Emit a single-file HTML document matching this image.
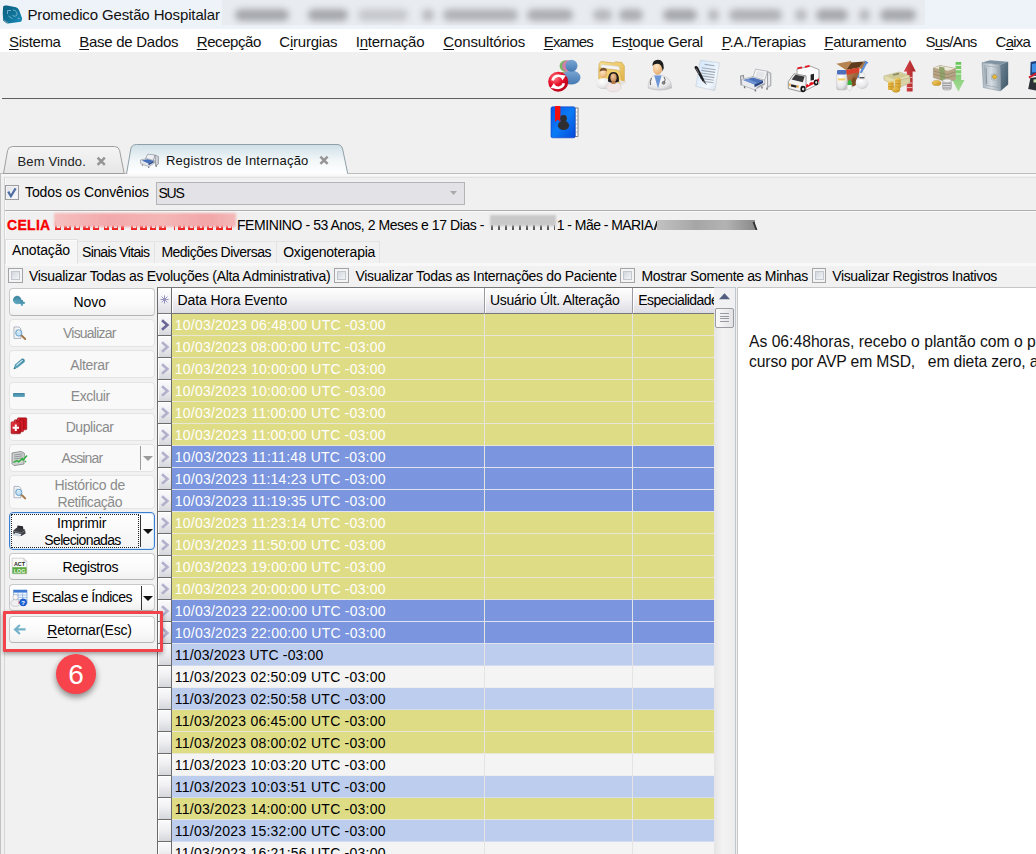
<!DOCTYPE html>
<html lang="pt-BR"><head><meta charset="utf-8"><title>Promedico Gestão Hospitalar</title>
<style>
html,body{margin:0;padding:0;background:#f0f0f0;}
body{width:1036px;height:854px;overflow:hidden;font-family:"Liberation Sans",sans-serif;}
#app{position:relative;width:1036px;height:854px;overflow:hidden;background:#f0f0f0;}
#app div,#app svg{position:absolute;box-sizing:border-box;}
.t{position:absolute;white-space:pre;line-height:1;color:#000;}
u{text-decoration:underline;text-underline-offset:2px;text-decoration-thickness:1px;}

</style></head><body>
<div id="app">
<div style="left:0px;top:0px;width:1036px;height:29px;background:#eef3f9;"></div>
<div style="left:222px;top:0px;width:703px;height:25px;background:#e8ebf0;"></div>
<div style="left:235px;top:8.5px;width:54px;height:12.5px;background:#a6a8ad;filter:blur(3.2px);border-radius:6px;"></div>
<div style="left:308px;top:8.5px;width:40px;height:12.5px;background:#a6a8ad;filter:blur(3.2px);border-radius:6px;"></div>
<div style="left:358px;top:8.5px;width:50px;height:12.5px;background:#c6c8cd;filter:blur(3.2px);border-radius:6px;"></div>
<div style="left:422px;top:8.5px;width:12px;height:12.5px;background:#b6b8bd;filter:blur(3.2px);border-radius:6px;"></div>
<div style="left:443px;top:8.5px;width:75px;height:12.5px;background:#b0b2b7;filter:blur(3.2px);border-radius:6px;"></div>
<div style="left:527px;top:8.5px;width:46px;height:12.5px;background:#acaeb3;filter:blur(3.2px);border-radius:6px;"></div>
<div style="left:593px;top:8.5px;width:19px;height:12.5px;background:#b6b8bd;filter:blur(3.2px);border-radius:6px;"></div>
<div style="left:619px;top:8.5px;width:24px;height:12.5px;background:#acaeb3;filter:blur(3.2px);border-radius:6px;"></div>
<div style="left:663px;top:8.5px;width:34px;height:12.5px;background:#a6a8ad;filter:blur(3.2px);border-radius:6px;"></div>
<div style="left:708px;top:8.5px;width:11px;height:12.5px;background:#b6b8bd;filter:blur(3.2px);border-radius:6px;"></div>
<div style="left:729px;top:8.5px;width:53px;height:12.5px;background:#b0b2b7;filter:blur(3.2px);border-radius:6px;"></div>
<div style="left:795px;top:8.5px;width:12px;height:12.5px;background:#b6b8bd;filter:blur(3.2px);border-radius:6px;"></div>
<div style="left:816px;top:8.5px;width:32px;height:12.5px;background:#a6a8ad;filter:blur(3.2px);border-radius:6px;"></div>
<div style="left:859px;top:8.5px;width:11px;height:12.5px;background:#b6b8bd;filter:blur(3.2px);border-radius:6px;"></div>
<div style="left:880px;top:8.5px;width:36px;height:12.5px;background:#a6a8ad;filter:blur(3.2px);border-radius:6px;"></div>
<span class="t" style="left:27.4px;top:6.90px;font-size:15px;color:#111;letter-spacing:-0.127px;">Promedico Gestão Hospitalar</span>
<svg style="left:0;top:0" width="26" height="29" viewBox="0 0 26 29">
<defs><linearGradient id="apg" x1="0" y1="0" x2="1" y2="1"><stop offset="0" stop-color="#0b5f7e"/><stop offset=".6" stop-color="#10769c"/><stop offset="1" stop-color="#1a8fc2"/></linearGradient></defs>
<path d="M3.2 6.2 Q4.5 5 7 5.6 L16 7.3 Q18 8 19 10 L22 18 Q22.4 21 21 21.8 L8 23.6 Q6.5 23.5 5.5 22.5 L3.2 20.4 Q2.2 13 3.2 6.2Z" fill="url(#apg)"/>
<path d="M4 20.5 L8 23" stroke="#7d97a8" stroke-width="1"/>
<g fill="none" stroke="#7fb8cf" stroke-width="1" opacity=".85"><path d="M7.5 14 V10.5 H11 M13 10 Q17.5 10.5 17 15 Q15 17.5 12.5 15.5 M8.5 16 L12.5 18.8 M17.5 18 L20 19"/></g>
</svg>
<div style="left:0px;top:29px;width:1036px;height:23px;background:#fff;"></div>
<span class="t" style="left:9px;top:33.70px;font-size:15px;color:#111;letter-spacing:-0.372px;"><u>S</u>istema</span>
<span class="t" style="left:79.3px;top:33.70px;font-size:15px;color:#111;letter-spacing:-0.276px;"><u>B</u>ase de Dados</span>
<span class="t" style="left:196.7px;top:33.70px;font-size:15px;color:#111;letter-spacing:-0.408px;"><u>R</u>ecepção</span>
<span class="t" style="left:279.3px;top:33.70px;font-size:15px;color:#111;letter-spacing:-0.227px;">C<u>i</u>rurgias</span>
<span class="t" style="left:355.7px;top:33.70px;font-size:15px;color:#111;letter-spacing:-0.229px;">I<u>n</u>ternação</span>
<span class="t" style="left:443.3px;top:33.70px;font-size:15px;color:#111;letter-spacing:-0.141px;"><u>C</u>onsultórios</span>
<span class="t" style="left:543.7px;top:33.70px;font-size:15px;color:#111;letter-spacing:-0.817px;"><u>E</u>xames</span>
<span class="t" style="left:611.7px;top:33.70px;font-size:15px;color:#111;letter-spacing:-0.377px;">Es<u>t</u>oque Geral</span>
<span class="t" style="left:721.7px;top:33.70px;font-size:15px;color:#111;letter-spacing:-0.238px;"><u>P</u>.A./Terapias</span>
<span class="t" style="left:824.3px;top:33.70px;font-size:15px;color:#111;letter-spacing:-0.269px;"><u>F</u>aturamento</span>
<span class="t" style="left:925.5px;top:33.70px;font-size:15px;color:#111;letter-spacing:-0.682px;">S<u>u</u>s/Ans</span>
<span class="t" style="left:995.6px;top:33.70px;font-size:15px;color:#111;letter-spacing:-0.795px;">C<u>a</u>ixa</span>
<div style="left:2px;top:98px;width:1034px;height:1px;background:#5f5f5f;"></div>
<svg style="left:540px;top:54px" width="496" height="90" viewBox="540 54 496 90">
<defs>
<radialGradient id="rdg" cx=".35" cy=".3" r=".8"><stop offset="0" stop-color="#ff7b86"/><stop offset=".45" stop-color="#e8112a"/><stop offset="1" stop-color="#b00018"/></radialGradient>
<linearGradient id="blp" x1="0" y1="0" x2="0" y2="1"><stop offset="0" stop-color="#7ba6d3"/><stop offset="1" stop-color="#4479b3"/></linearGradient>
<linearGradient id="fld" x1="0" y1="0" x2="1" y2="1"><stop offset="0" stop-color="#f7df92"/><stop offset="1" stop-color="#e2b347"/></linearGradient>
<radialGradient id="skn" cx=".4" cy=".35" r=".8"><stop offset="0" stop-color="#fde6c6"/><stop offset=".6" stop-color="#efbd85"/><stop offset="1" stop-color="#c98c55"/></radialGradient>
<radialGradient id="skn2" cx=".4" cy=".35" r=".8"><stop offset="0" stop-color="#f0c59a"/><stop offset="1" stop-color="#b67a48"/></radialGradient>
<radialGradient id="wht" cx=".4" cy=".3" r=".9"><stop offset="0" stop-color="#ffffff"/><stop offset=".6" stop-color="#e6e6e8"/><stop offset="1" stop-color="#a9a9ad"/></radialGradient>
<linearGradient id="pag" x1="0" y1="0" x2="1" y2="1"><stop offset="0" stop-color="#cfe5fb"/><stop offset=".7" stop-color="#f3f8fe"/><stop offset="1" stop-color="#c9d3de"/></linearGradient>
<linearGradient id="sfg" x1="0" y1="0" x2="1" y2="0"><stop offset="0" stop-color="#aab6c0"/><stop offset=".5" stop-color="#d5dce2"/><stop offset="1" stop-color="#95a3ae"/></linearGradient>
<linearGradient id="sfs" x1="0" y1="0" x2="1" y2="1"><stop offset="0" stop-color="#6f8797"/><stop offset="1" stop-color="#3f5566"/></linearGradient>
<linearGradient id="rar" x1="0" y1="0" x2="1" y2="0"><stop offset="0" stop-color="#d9474a"/><stop offset="1" stop-color="#a82428"/></linearGradient>
<linearGradient id="gar" x1="0" y1="0" x2="0" y2="1"><stop offset="0" stop-color="#69c45a"/><stop offset="1" stop-color="#a9dc9a"/></linearGradient>
<linearGradient id="bkg" x1="0" y1="0" x2="1" y2="1"><stop offset="0" stop-color="#0a55e6"/><stop offset=".5" stop-color="#0a7bf6"/><stop offset="1" stop-color="#0648d8"/></linearGradient>
<linearGradient id="gld" x1="0" y1="0" x2="1" y2="1"><stop offset="0" stop-color="#f8d467"/><stop offset="1" stop-color="#c8901a"/></linearGradient>
<linearGradient id="bxg" x1="0" y1="0" x2="1" y2="1"><stop offset="0" stop-color="#c08a5a"/><stop offset="1" stop-color="#7d4a22"/></linearGradient>
</defs>

<!-- 1: users + refresh -->
<g>
<ellipse cx="565.4" cy="78" rx="8.5" ry="6.5" fill="#79b565"/><circle cx="565.4" cy="66" r="5.8" fill="#79b565"/>
<ellipse cx="568" cy="78" rx="8.5" ry="6.5" fill="#d27fa8"/><circle cx="568" cy="66" r="5.8" fill="#d27fa8"/>
<ellipse cx="571.5" cy="77.5" rx="9" ry="7" fill="url(#blp)"/><circle cx="571.5" cy="65.8" r="6" fill="url(#blp)"/>
<circle cx="558.2" cy="81.8" r="10" fill="url(#rdg)"/>
<g fill="none" stroke="#fff" stroke-width="2.6"><path d="M552.6 80.5 A5.8 5.8 0 0 1 562.5 77.6"/><path d="M563.8 83.2 A5.8 5.8 0 0 1 553.9 86"/></g>
<path d="M560 74.8 L565.8 75.6 L562.4 80.6Z M556.4 88.8 L550.6 88 L554 83Z" fill="#fff"/>
</g>

<!-- 2: folder + people -->
<g>
<path d="M599 64 L601 61.5 L614 63 L615.5 61.8 L622 62.5 L624.3 66 L624.3 83 L599 81Z" fill="url(#fld)" stroke="#c9a040" stroke-width=".6"/>
<path d="M601 64.5 L619 66.5 L621 80 L602 78Z" fill="#f4f4f4" stroke="#cfcfcf" stroke-width=".5"/>
<path d="M599 68 L617 70 Q620 70.5 620.5 73 L622.5 84 L599 82Z" fill="#f1cf6e" stroke="#c99c3a" stroke-width=".5"/>
<path d="M619 80 L627 82 L621.5 85.5Z" fill="#e4e4e4"/>
<ellipse cx="603.5" cy="83.5" rx="7.5" ry="5.5" fill="url(#wht)"/>
<ellipse cx="603.2" cy="73.2" rx="3.8" ry="4.8" fill="url(#skn)"/><path d="M599.6 71.5 Q600 67.8 603.6 67.8 Q607 68 607 71.5 Q605 69.5 599.6 71.5Z" fill="#7a5230"/>
<ellipse cx="613.5" cy="86.8" rx="7.6" ry="5" fill="#f1e6e6" stroke="#cbbcbc" stroke-width=".4"/>
<path d="M608 81.5 Q607.5 72 613.5 72 Q619.5 72 619 81.5 Q613.5 84 608 81.5Z" fill="#1c1a1a"/>
<ellipse cx="613.5" cy="77.6" rx="3.2" ry="4.2" fill="url(#skn2)"/><path d="M611.8 81 L615.2 81 L615.6 84 L611.4 84Z" fill="#b67a48"/>
</g>

<!-- 3: doctor -->
<g>
<path d="M648 88 Q648 77.5 655.5 75 L660.5 75 Q671.7 77 671.7 88 Q660 92.5 648 88Z" fill="url(#wht)" stroke="#b4b4b8" stroke-width=".4"/>
<path d="M654.2 75.6 L658 88.5 L661.6 75.6Z" fill="#6d97d6"/>
<ellipse cx="657.6" cy="68.2" rx="4.7" ry="6.6" fill="url(#skn)"/>
<path d="M652.4 66 Q652.4 59.8 658 59.8 Q664 60 663.8 68 L662.5 71.5 Q662.3 65.5 659 64 Q655 63 652.4 66Z" fill="#1e1e1e"/>
<path d="M651.5 78 Q649.5 82 650.5 85 M664 77 Q666.5 80 664 82.5" fill="none" stroke="#555" stroke-width=".9"/><circle cx="663.6" cy="82.8" r="1.5" fill="#888" stroke="#444" stroke-width=".5"/>
</g>

<!-- 4: document + pen -->
<g>
<path d="M700.4 60.3 L719.4 62.8 L714.8 90.6 L695.8 86.4Z" fill="url(#pag)" stroke="#b6c3d0" stroke-width=".5"/>
<g stroke="#8d98a4" stroke-width="1.1" opacity=".8"><path d="M704.5 64.4 L714.5 65.8"/><path d="M701.8 67.8 L715.6 69.8M701.3 70.4 L715.2 72.4M700.8 73 L714.8 75M700.4 75.6 L714.4 77.6M700 78.2 L713.8 80.2M704 81.4 L713.4 82.8"/></g>
<path d="M694.6 68 Q694.2 66.4 695.6 66 Q697 65.8 697.8 67 L704.6 80.4 L702.6 81.6Z" fill="#1b1b1f"/><path d="M702.6 81.6 L704.6 80.4 L706.8 85Z" fill="#555"/><path d="M696.2 68.5 L699 74" stroke="#999" stroke-width=".7"/>
</g>

<!-- 5: bed -->
<g>
<path d="M767.4 71.4 L770.8 73.2 L770.8 85.6 L767.6 87.4Z" fill="#dcdde1" stroke="#8e9096" stroke-width=".8"/>
<path d="M768.6 74.5 L769.8 75.2 L769.8 84 L768.6 84.8Z" fill="#f0f0f0"/>
<path d="M755.6 69.2 L767.4 71.2 L764.6 80.4 L752.6 78Z" fill="#f6f6f7" stroke="#a4a6ab" stroke-width=".7"/>
<path d="M757 71 L765 72.4 L763.2 78 L755.2 76.6Z" fill="#e4e5e8"/>
<path d="M741.6 79.4 L752.8 76.6 L764.8 80.2 L764.8 84.4 L754.6 89.8 L741.6 85Z" fill="#e9eaed" stroke="#9b9da3" stroke-width=".6"/>
<path d="M743.4 80 L752.8 77.6 L763 80.4 L754.4 84.4Z" fill="#4a72bb"/>
<path d="M743.4 80 L748 78.9 L757.6 82.8 L754.4 84.4Z" fill="#6d92d2"/>
<path d="M754.4 84.4 L763 80.4 L763 83 L754.6 87.2Z" fill="#2a4784"/>
<path d="M756.8 87.6 L764.6 83.6" stroke="#8e9096" stroke-width="1"/>
<path d="M740.2 76.2 L743.4 75.6 L743.6 78.6 M740.6 76.4 L741.2 85.4" stroke="#96989e" stroke-width="1.3" fill="none"/>
<path d="M755.4 89.6 L755.4 91.6 M767 87.6 L767 89.8 M744.6 86.2 L744.6 88.2 M762 86.4 L762 88.4" stroke="#6f7177" stroke-width="1.4"/>
</g>

<!-- 6: ambulance -->
<g>
<path d="M797 69 L810.5 66.2 L819 69.6 L819 83.6 L805.5 90.5 L797 88Z" fill="#fbfbfb" stroke="#7f7f7f" stroke-width=".7"/>
<path d="M788.3 81.5 L794 73.8 L806 75.8 L806 90 L800 91.5 L788.3 88.5Z" fill="#f3f3f3" stroke="#6f6f6f" stroke-width=".7"/>
<path d="M791.6 79.6 L795.4 74.8 L804.6 76.4 L802.8 82.2Z" fill="#3a3a3c"/>
<path d="M806 84.8 L819 78.2 L819 81.2 L806 88Z" fill="#e3131f"/>
<path d="M807.6 84 L809.2 83.2 M812.2 81.6 L813.4 81 M816 79.6 L817 79.2" stroke="#fff" stroke-width="2.4"/>
<rect x="810.6" y="73.6" width="3.4" height="6.2" fill="#242426" transform="skewY(-14) translate(0 203)"/>
<path d="M797.4 68.4 L802 67.4 M805 66.8 L809.6 65.9" stroke="#e3131f" stroke-width="1.8"/>
<path d="M789 84.4 L790.6 84.8 M796.6 86.2 L798.6 86.7" stroke="#f0a020" stroke-width="2"/><path d="M791 85.4 L796.4 86.6" stroke="#222" stroke-width="2.2"/>
<ellipse cx="803" cy="89" rx="2.6" ry="3.2" fill="#111"/><ellipse cx="803.2" cy="89" rx="1.2" ry="1.6" fill="#ddd"/>
<ellipse cx="816" cy="82.4" rx="2.2" ry="2.9" fill="#111"/><ellipse cx="816.2" cy="82.4" rx="1" ry="1.4" fill="#ddd"/>
</g>

<!-- 7: box with medicines -->
<g>
<path d="M846 70 L851 62.4 L864.4 61.4 L859.4 67.6Z" fill="#5f3c1e"/>
<path d="M836.4 63.8 L851 61 L851.4 62.6 L846 70Z" fill="#b5834f"/>
<path d="M846 70 L859.4 67.6 L858.6 83.4 L848.6 88.6Z" fill="url(#bxg)"/>
<path d="M859.4 67.6 L864.4 61.4 L866.2 63.4 L861.4 69.6Z" fill="#a8733f"/>
<path d="M846 70 L859.4 67.6 L859.1 72.2 L846.3 75Z" fill="#d8412c"/>
<path d="M851.6 80 L854.6 76.4 L856.2 81 L858.6 78.6 L858.6 83.4 L853 86.4Z" fill="#7a4a22"/>
<path d="M866.6 62 L858 78" stroke="#5d8fd8" stroke-width="2.2"/><path d="M858 78 L856.4 81" stroke="#ddd" stroke-width="1.2"/><path d="M864.4 61 L868 63" stroke="#4d7fc8" stroke-width="1.4"/>
<rect x="836.6" y="73" width="10" height="17" rx="2" fill="url(#wht)" stroke="#b5b5b8" stroke-width=".4"/><rect x="837" y="70" width="9.2" height="4.4" rx="1.2" fill="#4c6fbe"/><rect x="838" y="78.4" width="7.2" height="2" fill="#f1cf62"/>
<ellipse cx="862" cy="83" rx="6.4" ry="6" fill="url(#wht)"/><rect x="859.2" y="73" width="5.6" height="6" rx="1" fill="#f2f2f3" stroke="#c9c9cc" stroke-width=".4"/><rect x="859.6" y="77" width="4.8" height="1.4" fill="#555"/>
<ellipse cx="849.6" cy="87" rx="2.4" ry="3.6" fill="#f4f4f4" stroke="#bbb" stroke-width=".4"/><path d="M847.4 85 Q847.2 80 849.8 80 Q852 80 851.9 85Z" fill="#3fb043"/>
</g>

<!-- 8: money + up arrow -->
<g>
<path d="M910 60 L915.8 71.4 L912.6 71.4 L912.6 91.4 L906.8 91.4 L906.8 71.4 L903.8 71.4Z" fill="url(#rar)"/>
<path d="M906.8 77.4 h5.8 M906.8 83 h5.8 M906.8 87.6 h5.8" stroke="#e9b9b9" stroke-width="1"/>
<path d="M884 76 L899 72 L909.6 75.4 L909.6 81 L895 86 L884 79.8Z" fill="#e2dcae" stroke="#a9a278" stroke-width=".5"/>
<path d="M886 76.2 L898.8 73 L907.4 75.8 L894.8 79.6Z" fill="#cfc994"/><path d="M893 75 l6 -1.4" stroke="#8c8a66" stroke-width="1.6"/>
<path d="M900 80 L910 77.6 L910 83 L900.6 87Z" fill="#d8d2a4" stroke="#a9a278" stroke-width=".4"/>
<rect x="888" y="81.6" width="5.6" height="8.4" rx="1" fill="url(#gld)"/><rect x="895" y="78.2" width="5.6" height="10" rx="1" fill="url(#gld)"/>
<ellipse cx="896" cy="89.4" rx="4" ry="2.8" fill="url(#gld)" stroke="#b07d14" stroke-width=".4"/>
<path d="M888 84 h5.6M888 86.6 h5.6M895 81 h5.6M895 83.6 h5.6" stroke="#b8841a" stroke-width=".6"/>
</g>

<!-- 9: money + down arrow -->
<g>
<path d="M955.6 62 h5.6 v18 h3.2 L958.4 91.8 L952.4 80 h3.2Z" fill="url(#gar)"/>
<path d="M955.6 65.4 h5.6 M955.6 69.6 h5.6 M955.6 74 h5.6" stroke="#dff2da" stroke-width="1.2"/>
<path d="M933.4 68 L940 65.4 L955.4 68.4 L955.4 79.6 L947 82 L933.4 77.6Z" fill="#b7a586" stroke="#8b7b60" stroke-width=".4"/>
<path d="M934 67.8 L940 65.8 L954.6 68.6 L948 70.8Z" fill="#efe9da"/>
<path d="M939 66.6 L944.4 67.6 L945.4 81.4 L940.2 79.8Z" fill="#8fa36a"/>
<path d="M933.6 71 L947 74.6 L955.2 72 M933.6 74 L947 77.8 L955.2 75.4" stroke="#8d7c62" stroke-width=".6" fill="none"/>
<ellipse cx="936.6" cy="83" rx="4.4" ry="2.6" fill="url(#gld)" stroke="#a9811c" stroke-width=".4"/>
<rect x="942.6" y="80.4" width="8.8" height="9.6" rx="2.4" fill="#d9d9db" stroke="#8d8d90" stroke-width=".5"/><path d="M942.8 83.2 h8.4M942.8 85.6 h8.4M942.8 88 h8.4" stroke="#77777a" stroke-width=".7"/><ellipse cx="947" cy="80.8" rx="4.3" ry="1.7" fill="#efeff0" stroke="#9a9a9d" stroke-width=".4"/>
</g>

<!-- 10: safe -->
<g>
<path d="M982 62.6 L990 60.2 L1008.2 61.8 L1000 64.8Z" fill="#8093a2"/>
<path d="M1000 64.8 L1008.2 61.8 L1008.2 84.4 L1000.6 91Z" fill="url(#sfs)"/>
<path d="M982 62.6 L1000 64.8 L1000.6 91 L983.4 87.6Z" fill="url(#sfg)" stroke="#7d8b96" stroke-width=".5"/>
<path d="M984.4 65.6 L998 67.4 L998.4 87.6 L985.4 85.2Z" fill="none" stroke="#93a0aa" stroke-width=".6"/>
<path d="M986 67.6 L986.6 84" stroke="#86939d" stroke-width="1.1"/>
<rect x="991.4" y="74" width="6" height="6" rx="1" fill="#c3ccd3" stroke="#8a97a1" stroke-width=".4"/>
<circle cx="994.6" cy="76.8" r="2.1" fill="#e8b93a" stroke="#9b7716" stroke-width=".5"/>
</g>

<!-- 11: cut-off register -->
<g>
<path d="M1030.6 62 L1036 61 L1036 76 L1030.2 75Z" fill="#1d3f7c"/><path d="M1032 64 L1036 63.2 L1036 72 L1032 72.6Z" fill="#3f8fe6"/>
<path d="M1028.6 76.6 L1036 72.6 L1036 74.8 L1029.2 78.6Z" fill="#d22128"/>
<path d="M1030.4 78 L1036 77.2 L1036 90.6 L1028.2 89Z" fill="#2b2f36"/><path d="M1033.6 79.6 L1036 79.3 L1036 82.6 L1033.4 82.6Z" fill="#c9e8b6"/>
</g>

<!-- row 2: address book -->
<g>
<rect x="575" y="108" width="3" height="28.4" fill="#fff" stroke="#555" stroke-width=".7"/>
<path d="M575.4 112 h2.6M575.4 116 h2.6M575.4 120 h2.6M575.4 124 h2.6M575.4 128 h2.6M575.4 132 h2.6" stroke="#aaa" stroke-width=".8"/>
<rect x="551" y="106.8" width="24.2" height="31" rx="1.6" fill="url(#bkg)" stroke="#0a3cc0" stroke-width=".6"/>
<path d="M555 106 h5.4 V122 L557.7 119.6 L555 122Z" fill="#f60d0d"/>
<circle cx="563.5" cy="118.4" r="3.4" fill="#2f2f31"/><ellipse cx="563.5" cy="125.4" rx="5.6" ry="4.6" fill="#2f2f31"/>
</g>
</svg>
<div style="left:0px;top:173px;width:1040px;height:700px;background:#f0f0f0;border-top:1px solid #bdbdbd;border-left:1px solid #c2c2c2;"></div>
<div style="left:1px;top:174px;width:1035px;height:2px;background:#f8f8f8;"></div>
<div style="left:4px;top:177px;width:1032px;height:1px;background:#e2e2e2;"></div>
<div style="left:4px;top:177px;width:1px;height:700px;background:#d6d6d6;"></div>
<div style="left:5px;top:178px;width:1px;height:700px;background:#fafafa;"></div>
<svg style="left:0;top:140px" width="360" height="36" viewBox="0 140 360 36">
<defs>
<linearGradient id="tg1" x1="0" y1="0" x2="0" y2="1"><stop offset="0" stop-color="#f5f5f5"/><stop offset="1" stop-color="#e6e6e6"/></linearGradient>
<linearGradient id="tg2" x1="0" y1="0" x2="0" y2="1"><stop offset="0" stop-color="#cfe0e7"/><stop offset=".55" stop-color="#f2f7f9"/><stop offset="1" stop-color="#ffffff"/></linearGradient>
</defs>
<path d="M3.5 173.5 L7.6 150.5 Q8.4 146.5 12.5 146.5 L114.5 146.5 Q118.8 146.5 119.6 150.5 L124.2 173.5 Z" fill="url(#tg1)" stroke="#9f9f9f" stroke-width="1"/>
<path d="M126.5 174 L130.8 149 Q131.7 144.5 136.5 144.5 L337 144.5 Q341.6 144.5 342.6 149 L347.8 174" fill="url(#tg2)" stroke="#8fa0a8" stroke-width="1"/>
<path d="M127.3 173.5 H347.3" stroke="#fdfdfd" stroke-width="1.2"/>
<g stroke="#949494" stroke-width="2.5" stroke-linecap="butt"><path d="M97.6 157.6l7.2 7.2M104.8 157.6l-7.2 7.2"/><path d="M320.4 156.6l7.2 7.2M327.6 156.6l-7.2 7.2"/></g>
</svg>
<span class="t" style="left:17.5px;top:154.70px;font-size:13px;color:#222;letter-spacing:0.153px;">Bem Vindo.</span>
<span class="t" style="left:166px;top:153.80px;font-size:13px;color:#111;letter-spacing:0.194px;">Registros de Internação</span>
<svg style="left:5px;top:185px" width="14" height="15" viewBox="0 0 14 15">
<defs><linearGradient id="ckg" x1="0" y1="0" x2="1" y2="1"><stop offset="0" stop-color="#dfe2e8"/><stop offset="1" stop-color="#fbfbfc"/></linearGradient></defs>
<rect x=".5" y=".5" width="13" height="14" fill="url(#ckg)" stroke="#9c9c9c"/>
<rect x="1.5" y="1.5" width="11" height="12" fill="none" stroke="#f1f2f5"/>
<path d="M3.2 6.6 L5.9 11.2 L10.6 3.4" fill="none" stroke="#4c6ca3" stroke-width="2.2" stroke-linejoin="miter"/>
</svg>
<span class="t" style="left:25px;top:185.15px;font-size:14px;letter-spacing:-0.115px;">Todos os Convênios</span>
<div style="left:156px;top:182px;width:309px;height:23px;background:#e3e3e7;border:1px solid #b4b4b8;"></div>
<span class="t" style="left:158.5px;top:186.15px;font-size:14px;letter-spacing:-1.266px;">SUS</span>
<svg style="left:450px;top:191px" width="7" height="4" viewBox="0 0 7 4"><path d="M0 0h7L3.5 4z" fill="#a9a9a9"/></svg>
<div style="left:5px;top:210px;width:1031px;height:1px;background:#aeaeae;"></div>
<div style="left:5px;top:211px;width:1031px;height:1px;background:#f9f9f9;"></div>
<span class="t" style="left:7px;top:218.15px;font-size:14px;color:#f80000;font-weight:700;letter-spacing:0.300px;-webkit-text-stroke:.3px #f80000;">CELIA</span>
<div style="left:55px;top:221px;width:180px;height:9px;background:repeating-linear-gradient(90deg,#ee2222 0 2.2px,transparent 2.2px 4.6px,#ee2222 4.6px 6.4px,transparent 6.4px 9.5px);"></div>
<div style="left:55px;top:227.5px;width:180px;height:2.5px;background:repeating-linear-gradient(90deg,#ee2222 0 6.5px,transparent 6.5px 9.5px);"></div>
<div style="left:99px;top:221px;width:5px;height:9px;background:#f0f0f0;"></div>
<div style="left:124px;top:221px;width:5px;height:9px;background:#f0f0f0;"></div>
<div style="left:169px;top:221px;width:5px;height:9px;background:#f0f0f0;"></div>
<div style="left:54px;top:213px;width:182px;height:13.5px;background:linear-gradient(90deg,#f6c0c0,#f3a9ab 30%,#f5b6b6 60%,#f2a6a8 85%,#f4b9b9);filter:blur(1.3px);"></div>
<span class="t" style="left:237px;top:218.15px;font-size:14px;letter-spacing:-0.429px;">FEMININO - 53 Anos, 2 Meses e 17 Dias - </span>
<div style="left:491px;top:225px;width:64px;height:5px;background:repeating-linear-gradient(90deg,#333 0 2px,transparent 2px 7px);opacity:.8;"></div>
<div style="left:490px;top:215px;width:66px;height:11px;background:#c9c9c9;filter:blur(1.2px);"></div>
<span class="t" style="left:556.8px;top:218.15px;font-size:14px;letter-spacing:-0.554px;">1 - Mãe - MARIA </span>
<div style="left:654.5px;top:221px;width:1.6px;height:9px;background:#222;transform:skewX(-18deg);"></div>
<div style="left:657px;top:220px;width:98px;height:10px;background:linear-gradient(90deg,#c2c2c2,#a6a6a6 40%,#b3b3b3 70%,#8a8a8a);filter:blur(.7px);"></div>
<div style="left:754px;top:222px;width:2px;height:8px;background:#333;transform:skewX(20deg);"></div>
<div style="left:5px;top:263px;width:1031px;height:3px;background:#f8f8f8;"></div>
<div style="left:5px;top:266px;width:1031px;height:600px;background:#f1f1f1;"></div>
<div style="left:77px;top:241px;width:78px;height:22px;background:#f1f1f1;border:1px solid #e3e3e3;border-bottom:none;"></div>
<div style="left:154px;top:241px;width:123px;height:22px;background:#f1f1f1;border:1px solid #e3e3e3;border-bottom:none;"></div>
<div style="left:276px;top:241px;width:104px;height:22px;background:#f1f1f1;border:1px solid #e3e3e3;border-bottom:none;"></div>
<div style="left:5px;top:239px;width:73px;height:25px;background:#f6f6f6;border:1px solid #e0e0e0;border-bottom:none;box-shadow:inset 1px 1px 0 #fcfcfc;"></div>
<span class="t" style="left:12px;top:243.15px;font-size:14px;letter-spacing:-0.146px;">Anotação</span>
<span class="t" style="left:82.1px;top:245.15px;font-size:14px;letter-spacing:-0.678px;">Sinais Vitais</span>
<span class="t" style="left:161.4px;top:245.15px;font-size:14px;letter-spacing:-0.516px;">Medições Diversas</span>
<span class="t" style="left:283.2px;top:245.15px;font-size:14px;letter-spacing:-0.211px;">Oxigenoterapia</span>
<div style="left:8.2px;top:268.2px;width:14.6px;height:14.6px;background:#f4f4f4;border:1px solid #a2a4a8;"></div>
<div style="left:11.0px;top:271.0px;width:9px;height:9px;background:linear-gradient(135deg,#d3d7de,#f3f4f6);border:1px solid #c3c8d0;"></div>
<div style="left:334.4px;top:268.2px;width:14.6px;height:14.6px;background:#f4f4f4;border:1px solid #a2a4a8;"></div>
<div style="left:337.2px;top:271.0px;width:9px;height:9px;background:linear-gradient(135deg,#d3d7de,#f3f4f6);border:1px solid #c3c8d0;"></div>
<div style="left:620.2px;top:268.2px;width:14.6px;height:14.6px;background:#f4f4f4;border:1px solid #a2a4a8;"></div>
<div style="left:623.0px;top:271.0px;width:9px;height:9px;background:linear-gradient(135deg,#d3d7de,#f3f4f6);border:1px solid #c3c8d0;"></div>
<div style="left:811.8px;top:268.2px;width:14.6px;height:14.6px;background:#f4f4f4;border:1px solid #a2a4a8;"></div>
<div style="left:814.5999999999999px;top:271.0px;width:9px;height:9px;background:linear-gradient(135deg,#d3d7de,#f3f4f6);border:1px solid #c3c8d0;"></div>
<span class="t" style="left:28.9px;top:269.15px;font-size:14px;letter-spacing:-0.303px;">Visualizar Todas as Evoluções (Alta Administrativa)</span>
<span class="t" style="left:355.5px;top:269.15px;font-size:14px;letter-spacing:-0.319px;">Visualizar Todas as Internações do Paciente</span>
<span class="t" style="left:641.4px;top:269.15px;font-size:14px;letter-spacing:-0.343px;">Mostrar Somente as Minhas</span>
<span class="t" style="left:832.3px;top:269.15px;font-size:14px;letter-spacing:-0.376px;">Visualizar Registros Inativos</span>
<div style="left:157px;top:287px;width:579px;height:600px;background:#fff;border:1px solid #c2c6cd;border-left:1px solid #6a6a6a;"></div>
<div style="left:157px;top:287px;width:557px;height:1px;background:#787878;"></div>
<div style="left:158px;top:288px;width:556px;height:26px;background:linear-gradient(#ffffff 0%,#f3f3f6 45%,#dcdce3 100%);border-bottom:1px solid #77777c;"></div>
<div style="left:171px;top:288px;width:1px;height:26px;background:#6c6c6c;"></div>
<div style="left:172px;top:288px;width:1px;height:25px;background:#fff;"></div>
<div style="left:484px;top:288px;width:1px;height:26px;background:#9a9aa0;"></div>
<div style="left:485px;top:288px;width:1px;height:25px;background:#fff;"></div>
<div style="left:632px;top:288px;width:1px;height:26px;background:#9a9aa0;"></div>
<div style="left:633px;top:288px;width:1px;height:25px;background:#fff;"></div>
<span class="t" style="left:177.5px;top:293.15px;font-size:14px;letter-spacing:-0.106px;">Data Hora Evento</span>
<span class="t" style="left:490px;top:293.15px;font-size:14px;letter-spacing:-0.268px;">Usuário Últ. Alteração</span>
<span class="t" style="left:638.3px;top:293.15px;font-size:14px;letter-spacing:-0.552px;clip-path:inset(0 3.5px 0 0);">Especialidade</span>
<svg style="left:159px;top:294px" width="11" height="11" viewBox="0 0 11 11"><g stroke="#9694bd" stroke-width="1"><path d="M5.5 1.4v8.2M1.4 5.5h8.2M2.6 2.6l5.8 5.8M8.4 2.6l-5.8 5.8"/></g></svg>
<div style="left:172px;top:314px;width:542px;height:22px;background:#dfdc86;border-bottom:1px solid #e8e7d6;"></div>
<div style="left:484px;top:314px;width:1px;height:22px;background:#e4e4e4;"></div>
<div style="left:632px;top:314px;width:1px;height:22px;background:#e4e4e4;"></div>
<div style="left:158px;top:314px;width:14px;height:22px;background:linear-gradient(#fbfbfc 0%,#f0f0f3 45%,#d6d7dc 100%);border-right:1px solid #6c6c6c;border-bottom:1px solid #6c6c6c;box-shadow:inset 1px 1px 0 #fff;"></div>
<svg style="left:160px;top:318px" width="10" height="14" viewBox="0 0 10 14"><path d="M2 2.2L7.4 7L2 11.8" fill="none" stroke="#6a6696" stroke-width="2.6"/></svg>
<span class="t" style="left:174.8px;top:318.15px;font-size:14px;color:#fff;letter-spacing:0.210px;">10/03/2023 06:48:00 UTC -03:00</span>
<div style="left:172px;top:336px;width:542px;height:22px;background:#dfdc86;border-bottom:1px solid #e8e7d6;"></div>
<div style="left:484px;top:336px;width:1px;height:22px;background:#e4e4e4;"></div>
<div style="left:632px;top:336px;width:1px;height:22px;background:#e4e4e4;"></div>
<div style="left:158px;top:336px;width:14px;height:22px;background:linear-gradient(#fbfbfc 0%,#f0f0f3 45%,#d6d7dc 100%);border-right:1px solid #6c6c6c;border-bottom:1px solid #6c6c6c;box-shadow:inset 1px 1px 0 #fff;"></div>
<svg style="left:160px;top:340px" width="10" height="14" viewBox="0 0 10 14"><path d="M2 2.2L7.4 7L2 11.8" fill="none" stroke="#b2b0cd" stroke-width="2.6"/></svg>
<span class="t" style="left:174.8px;top:340.15px;font-size:14px;color:#fff;letter-spacing:0.210px;">10/03/2023 08:00:00 UTC -03:00</span>
<div style="left:172px;top:358px;width:542px;height:22px;background:#dfdc86;border-bottom:1px solid #e8e7d6;"></div>
<div style="left:484px;top:358px;width:1px;height:22px;background:#e4e4e4;"></div>
<div style="left:632px;top:358px;width:1px;height:22px;background:#e4e4e4;"></div>
<div style="left:158px;top:358px;width:14px;height:22px;background:linear-gradient(#fbfbfc 0%,#f0f0f3 45%,#d6d7dc 100%);border-right:1px solid #6c6c6c;border-bottom:1px solid #6c6c6c;box-shadow:inset 1px 1px 0 #fff;"></div>
<svg style="left:160px;top:362px" width="10" height="14" viewBox="0 0 10 14"><path d="M2 2.2L7.4 7L2 11.8" fill="none" stroke="#b2b0cd" stroke-width="2.6"/></svg>
<span class="t" style="left:174.8px;top:362.15px;font-size:14px;color:#fff;letter-spacing:0.210px;">10/03/2023 10:00:00 UTC -03:00</span>
<div style="left:172px;top:380px;width:542px;height:22px;background:#dfdc86;border-bottom:1px solid #e8e7d6;"></div>
<div style="left:484px;top:380px;width:1px;height:22px;background:#e4e4e4;"></div>
<div style="left:632px;top:380px;width:1px;height:22px;background:#e4e4e4;"></div>
<div style="left:158px;top:380px;width:14px;height:22px;background:linear-gradient(#fbfbfc 0%,#f0f0f3 45%,#d6d7dc 100%);border-right:1px solid #6c6c6c;border-bottom:1px solid #6c6c6c;box-shadow:inset 1px 1px 0 #fff;"></div>
<svg style="left:160px;top:384px" width="10" height="14" viewBox="0 0 10 14"><path d="M2 2.2L7.4 7L2 11.8" fill="none" stroke="#b2b0cd" stroke-width="2.6"/></svg>
<span class="t" style="left:174.8px;top:384.15px;font-size:14px;color:#fff;letter-spacing:0.210px;">10/03/2023 10:00:00 UTC -03:00</span>
<div style="left:172px;top:402px;width:542px;height:22px;background:#dfdc86;border-bottom:1px solid #e8e7d6;"></div>
<div style="left:484px;top:402px;width:1px;height:22px;background:#e4e4e4;"></div>
<div style="left:632px;top:402px;width:1px;height:22px;background:#e4e4e4;"></div>
<div style="left:158px;top:402px;width:14px;height:22px;background:linear-gradient(#fbfbfc 0%,#f0f0f3 45%,#d6d7dc 100%);border-right:1px solid #6c6c6c;border-bottom:1px solid #6c6c6c;box-shadow:inset 1px 1px 0 #fff;"></div>
<svg style="left:160px;top:406px" width="10" height="14" viewBox="0 0 10 14"><path d="M2 2.2L7.4 7L2 11.8" fill="none" stroke="#b2b0cd" stroke-width="2.6"/></svg>
<span class="t" style="left:174.8px;top:406.15px;font-size:14px;color:#fff;letter-spacing:0.244px;">10/03/2023 11:00:00 UTC -03:00</span>
<div style="left:172px;top:424px;width:542px;height:22px;background:#dfdc86;border-bottom:1px solid #e8e7d6;"></div>
<div style="left:484px;top:424px;width:1px;height:22px;background:#e4e4e4;"></div>
<div style="left:632px;top:424px;width:1px;height:22px;background:#e4e4e4;"></div>
<div style="left:158px;top:424px;width:14px;height:22px;background:linear-gradient(#fbfbfc 0%,#f0f0f3 45%,#d6d7dc 100%);border-right:1px solid #6c6c6c;border-bottom:1px solid #6c6c6c;box-shadow:inset 1px 1px 0 #fff;"></div>
<svg style="left:160px;top:428px" width="10" height="14" viewBox="0 0 10 14"><path d="M2 2.2L7.4 7L2 11.8" fill="none" stroke="#b2b0cd" stroke-width="2.6"/></svg>
<span class="t" style="left:174.8px;top:428.15px;font-size:14px;color:#fff;letter-spacing:0.244px;">10/03/2023 11:00:00 UTC -03:00</span>
<div style="left:172px;top:446px;width:542px;height:22px;background:#7b96de;border-bottom:1px solid #dfe3f0;"></div>
<div style="left:484px;top:446px;width:1px;height:22px;background:#e4e4e4;"></div>
<div style="left:632px;top:446px;width:1px;height:22px;background:#e4e4e4;"></div>
<div style="left:158px;top:446px;width:14px;height:22px;background:linear-gradient(#fbfbfc 0%,#f0f0f3 45%,#d6d7dc 100%);border-right:1px solid #6c6c6c;border-bottom:1px solid #6c6c6c;box-shadow:inset 1px 1px 0 #fff;"></div>
<svg style="left:160px;top:450px" width="10" height="14" viewBox="0 0 10 14"><path d="M2 2.2L7.4 7L2 11.8" fill="none" stroke="#b2b0cd" stroke-width="2.6"/></svg>
<span class="t" style="left:174.8px;top:450.15px;font-size:14px;color:#fff;letter-spacing:0.279px;">10/03/2023 11:11:48 UTC -03:00</span>
<div style="left:172px;top:468px;width:542px;height:22px;background:#7b96de;border-bottom:1px solid #dfe3f0;"></div>
<div style="left:484px;top:468px;width:1px;height:22px;background:#e4e4e4;"></div>
<div style="left:632px;top:468px;width:1px;height:22px;background:#e4e4e4;"></div>
<div style="left:158px;top:468px;width:14px;height:22px;background:linear-gradient(#fbfbfc 0%,#f0f0f3 45%,#d6d7dc 100%);border-right:1px solid #6c6c6c;border-bottom:1px solid #6c6c6c;box-shadow:inset 1px 1px 0 #fff;"></div>
<svg style="left:160px;top:472px" width="10" height="14" viewBox="0 0 10 14"><path d="M2 2.2L7.4 7L2 11.8" fill="none" stroke="#b2b0cd" stroke-width="2.6"/></svg>
<span class="t" style="left:174.8px;top:472.15px;font-size:14px;color:#fff;letter-spacing:0.244px;">10/03/2023 11:14:23 UTC -03:00</span>
<div style="left:172px;top:490px;width:542px;height:22px;background:#7b96de;border-bottom:1px solid #dfe3f0;"></div>
<div style="left:484px;top:490px;width:1px;height:22px;background:#e4e4e4;"></div>
<div style="left:632px;top:490px;width:1px;height:22px;background:#e4e4e4;"></div>
<div style="left:158px;top:490px;width:14px;height:22px;background:linear-gradient(#fbfbfc 0%,#f0f0f3 45%,#d6d7dc 100%);border-right:1px solid #6c6c6c;border-bottom:1px solid #6c6c6c;box-shadow:inset 1px 1px 0 #fff;"></div>
<svg style="left:160px;top:494px" width="10" height="14" viewBox="0 0 10 14"><path d="M2 2.2L7.4 7L2 11.8" fill="none" stroke="#b2b0cd" stroke-width="2.6"/></svg>
<span class="t" style="left:174.8px;top:494.15px;font-size:14px;color:#fff;letter-spacing:0.244px;">10/03/2023 11:19:35 UTC -03:00</span>
<div style="left:172px;top:512px;width:542px;height:22px;background:#dfdc86;border-bottom:1px solid #e8e7d6;"></div>
<div style="left:484px;top:512px;width:1px;height:22px;background:#e4e4e4;"></div>
<div style="left:632px;top:512px;width:1px;height:22px;background:#e4e4e4;"></div>
<div style="left:158px;top:512px;width:14px;height:22px;background:linear-gradient(#fbfbfc 0%,#f0f0f3 45%,#d6d7dc 100%);border-right:1px solid #6c6c6c;border-bottom:1px solid #6c6c6c;box-shadow:inset 1px 1px 0 #fff;"></div>
<svg style="left:160px;top:516px" width="10" height="14" viewBox="0 0 10 14"><path d="M2 2.2L7.4 7L2 11.8" fill="none" stroke="#b2b0cd" stroke-width="2.6"/></svg>
<span class="t" style="left:174.8px;top:516.15px;font-size:14px;color:#fff;letter-spacing:0.244px;">10/03/2023 11:23:14 UTC -03:00</span>
<div style="left:172px;top:534px;width:542px;height:22px;background:#dfdc86;border-bottom:1px solid #e8e7d6;"></div>
<div style="left:484px;top:534px;width:1px;height:22px;background:#e4e4e4;"></div>
<div style="left:632px;top:534px;width:1px;height:22px;background:#e4e4e4;"></div>
<div style="left:158px;top:534px;width:14px;height:22px;background:linear-gradient(#fbfbfc 0%,#f0f0f3 45%,#d6d7dc 100%);border-right:1px solid #6c6c6c;border-bottom:1px solid #6c6c6c;box-shadow:inset 1px 1px 0 #fff;"></div>
<svg style="left:160px;top:538px" width="10" height="14" viewBox="0 0 10 14"><path d="M2 2.2L7.4 7L2 11.8" fill="none" stroke="#b2b0cd" stroke-width="2.6"/></svg>
<span class="t" style="left:174.8px;top:538.15px;font-size:14px;color:#fff;letter-spacing:0.244px;">10/03/2023 11:50:00 UTC -03:00</span>
<div style="left:172px;top:556px;width:542px;height:22px;background:#dfdc86;border-bottom:1px solid #e8e7d6;"></div>
<div style="left:484px;top:556px;width:1px;height:22px;background:#e4e4e4;"></div>
<div style="left:632px;top:556px;width:1px;height:22px;background:#e4e4e4;"></div>
<div style="left:158px;top:556px;width:14px;height:22px;background:linear-gradient(#fbfbfc 0%,#f0f0f3 45%,#d6d7dc 100%);border-right:1px solid #6c6c6c;border-bottom:1px solid #6c6c6c;box-shadow:inset 1px 1px 0 #fff;"></div>
<svg style="left:160px;top:560px" width="10" height="14" viewBox="0 0 10 14"><path d="M2 2.2L7.4 7L2 11.8" fill="none" stroke="#b2b0cd" stroke-width="2.6"/></svg>
<span class="t" style="left:174.8px;top:560.15px;font-size:14px;color:#fff;letter-spacing:0.210px;">10/03/2023 19:00:00 UTC -03:00</span>
<div style="left:172px;top:578px;width:542px;height:22px;background:#dfdc86;border-bottom:1px solid #e8e7d6;"></div>
<div style="left:484px;top:578px;width:1px;height:22px;background:#e4e4e4;"></div>
<div style="left:632px;top:578px;width:1px;height:22px;background:#e4e4e4;"></div>
<div style="left:158px;top:578px;width:14px;height:22px;background:linear-gradient(#fbfbfc 0%,#f0f0f3 45%,#d6d7dc 100%);border-right:1px solid #6c6c6c;border-bottom:1px solid #6c6c6c;box-shadow:inset 1px 1px 0 #fff;"></div>
<svg style="left:160px;top:582px" width="10" height="14" viewBox="0 0 10 14"><path d="M2 2.2L7.4 7L2 11.8" fill="none" stroke="#b2b0cd" stroke-width="2.6"/></svg>
<span class="t" style="left:174.8px;top:582.15px;font-size:14px;color:#fff;letter-spacing:0.210px;">10/03/2023 20:00:00 UTC -03:00</span>
<div style="left:172px;top:600px;width:542px;height:22px;background:#7b96de;border-bottom:1px solid #dfe3f0;"></div>
<div style="left:484px;top:600px;width:1px;height:22px;background:#e4e4e4;"></div>
<div style="left:632px;top:600px;width:1px;height:22px;background:#e4e4e4;"></div>
<div style="left:158px;top:600px;width:14px;height:22px;background:linear-gradient(#fbfbfc 0%,#f0f0f3 45%,#d6d7dc 100%);border-right:1px solid #6c6c6c;border-bottom:1px solid #6c6c6c;box-shadow:inset 1px 1px 0 #fff;"></div>
<svg style="left:160px;top:604px" width="10" height="14" viewBox="0 0 10 14"><path d="M2 2.2L7.4 7L2 11.8" fill="none" stroke="#b2b0cd" stroke-width="2.6"/></svg>
<span class="t" style="left:174.8px;top:604.15px;font-size:14px;color:#fff;letter-spacing:0.210px;">10/03/2023 22:00:00 UTC -03:00</span>
<div style="left:172px;top:622px;width:542px;height:22px;background:#7b96de;border-bottom:1px solid #dfe3f0;"></div>
<div style="left:484px;top:622px;width:1px;height:22px;background:#e4e4e4;"></div>
<div style="left:632px;top:622px;width:1px;height:22px;background:#e4e4e4;"></div>
<div style="left:158px;top:622px;width:14px;height:22px;background:linear-gradient(#fbfbfc 0%,#f0f0f3 45%,#d6d7dc 100%);border-right:1px solid #6c6c6c;border-bottom:1px solid #6c6c6c;box-shadow:inset 1px 1px 0 #fff;"></div>
<svg style="left:160px;top:626px" width="10" height="14" viewBox="0 0 10 14"><path d="M2 2.2L7.4 7L2 11.8" fill="none" stroke="#b2b0cd" stroke-width="2.6"/></svg>
<span class="t" style="left:174.8px;top:626.15px;font-size:14px;color:#fff;letter-spacing:0.210px;">10/03/2023 22:00:00 UTC -03:00</span>
<div style="left:172px;top:644px;width:542px;height:22px;background:#bccdee;border-bottom:1px solid #d3dcee;"></div>
<div style="left:484px;top:644px;width:1px;height:22px;background:#e4e4e4;"></div>
<div style="left:632px;top:644px;width:1px;height:22px;background:#e4e4e4;"></div>
<div style="left:158px;top:644px;width:14px;height:22px;background:linear-gradient(#fbfbfc 0%,#f0f0f3 45%,#d6d7dc 100%);border-right:1px solid #6c6c6c;border-bottom:1px solid #6c6c6c;box-shadow:inset 1px 1px 0 #fff;"></div>
<span class="t" style="left:174.8px;top:648.15px;font-size:14px;letter-spacing:0.163px;">11/03/2023 UTC -03:00</span>
<div style="left:172px;top:666px;width:542px;height:22px;background:#f4f4f4;border-bottom:1px solid #eeeeee;"></div>
<div style="left:484px;top:666px;width:1px;height:22px;background:#e4e4e4;"></div>
<div style="left:632px;top:666px;width:1px;height:22px;background:#e4e4e4;"></div>
<div style="left:158px;top:666px;width:14px;height:22px;background:linear-gradient(#fbfbfc 0%,#f0f0f3 45%,#d6d7dc 100%);border-right:1px solid #6c6c6c;border-bottom:1px solid #6c6c6c;box-shadow:inset 1px 1px 0 #fff;"></div>
<span class="t" style="left:174.8px;top:670.15px;font-size:14px;letter-spacing:0.244px;">11/03/2023 02:50:09 UTC -03:00</span>
<div style="left:172px;top:688px;width:542px;height:22px;background:#bccdee;border-bottom:1px solid #d3dcee;"></div>
<div style="left:484px;top:688px;width:1px;height:22px;background:#e4e4e4;"></div>
<div style="left:632px;top:688px;width:1px;height:22px;background:#e4e4e4;"></div>
<div style="left:158px;top:688px;width:14px;height:22px;background:linear-gradient(#fbfbfc 0%,#f0f0f3 45%,#d6d7dc 100%);border-right:1px solid #6c6c6c;border-bottom:1px solid #6c6c6c;box-shadow:inset 1px 1px 0 #fff;"></div>
<span class="t" style="left:174.8px;top:692.15px;font-size:14px;letter-spacing:0.244px;">11/03/2023 02:50:58 UTC -03:00</span>
<div style="left:172px;top:710px;width:542px;height:22px;background:#dfdc86;border-bottom:1px solid #e8e7d6;"></div>
<div style="left:484px;top:710px;width:1px;height:22px;background:#e4e4e4;"></div>
<div style="left:632px;top:710px;width:1px;height:22px;background:#e4e4e4;"></div>
<div style="left:158px;top:710px;width:14px;height:22px;background:linear-gradient(#fbfbfc 0%,#f0f0f3 45%,#d6d7dc 100%);border-right:1px solid #6c6c6c;border-bottom:1px solid #6c6c6c;box-shadow:inset 1px 1px 0 #fff;"></div>
<span class="t" style="left:174.8px;top:714.15px;font-size:14px;letter-spacing:0.244px;">11/03/2023 06:45:00 UTC -03:00</span>
<div style="left:172px;top:732px;width:542px;height:22px;background:#dfdc86;border-bottom:1px solid #e8e7d6;"></div>
<div style="left:484px;top:732px;width:1px;height:22px;background:#e4e4e4;"></div>
<div style="left:632px;top:732px;width:1px;height:22px;background:#e4e4e4;"></div>
<div style="left:158px;top:732px;width:14px;height:22px;background:linear-gradient(#fbfbfc 0%,#f0f0f3 45%,#d6d7dc 100%);border-right:1px solid #6c6c6c;border-bottom:1px solid #6c6c6c;box-shadow:inset 1px 1px 0 #fff;"></div>
<span class="t" style="left:174.8px;top:736.15px;font-size:14px;letter-spacing:0.244px;">11/03/2023 08:00:02 UTC -03:00</span>
<div style="left:172px;top:754px;width:542px;height:22px;background:#f4f4f4;border-bottom:1px solid #eeeeee;"></div>
<div style="left:484px;top:754px;width:1px;height:22px;background:#e4e4e4;"></div>
<div style="left:632px;top:754px;width:1px;height:22px;background:#e4e4e4;"></div>
<div style="left:158px;top:754px;width:14px;height:22px;background:linear-gradient(#fbfbfc 0%,#f0f0f3 45%,#d6d7dc 100%);border-right:1px solid #6c6c6c;border-bottom:1px solid #6c6c6c;box-shadow:inset 1px 1px 0 #fff;"></div>
<span class="t" style="left:174.8px;top:758.15px;font-size:14px;letter-spacing:0.244px;">11/03/2023 10:03:20 UTC -03:00</span>
<div style="left:172px;top:776px;width:542px;height:22px;background:#bccdee;border-bottom:1px solid #d3dcee;"></div>
<div style="left:484px;top:776px;width:1px;height:22px;background:#e4e4e4;"></div>
<div style="left:632px;top:776px;width:1px;height:22px;background:#e4e4e4;"></div>
<div style="left:158px;top:776px;width:14px;height:22px;background:linear-gradient(#fbfbfc 0%,#f0f0f3 45%,#d6d7dc 100%);border-right:1px solid #6c6c6c;border-bottom:1px solid #6c6c6c;box-shadow:inset 1px 1px 0 #fff;"></div>
<span class="t" style="left:174.8px;top:780.15px;font-size:14px;letter-spacing:0.244px;">11/03/2023 10:03:51 UTC -03:00</span>
<div style="left:172px;top:798px;width:542px;height:22px;background:#dfdc86;border-bottom:1px solid #e8e7d6;"></div>
<div style="left:484px;top:798px;width:1px;height:22px;background:#e4e4e4;"></div>
<div style="left:632px;top:798px;width:1px;height:22px;background:#e4e4e4;"></div>
<div style="left:158px;top:798px;width:14px;height:22px;background:linear-gradient(#fbfbfc 0%,#f0f0f3 45%,#d6d7dc 100%);border-right:1px solid #6c6c6c;border-bottom:1px solid #6c6c6c;box-shadow:inset 1px 1px 0 #fff;"></div>
<span class="t" style="left:174.8px;top:802.15px;font-size:14px;letter-spacing:0.244px;">11/03/2023 14:00:00 UTC -03:00</span>
<div style="left:172px;top:820px;width:542px;height:22px;background:#bccdee;border-bottom:1px solid #d3dcee;"></div>
<div style="left:484px;top:820px;width:1px;height:22px;background:#e4e4e4;"></div>
<div style="left:632px;top:820px;width:1px;height:22px;background:#e4e4e4;"></div>
<div style="left:158px;top:820px;width:14px;height:22px;background:linear-gradient(#fbfbfc 0%,#f0f0f3 45%,#d6d7dc 100%);border-right:1px solid #6c6c6c;border-bottom:1px solid #6c6c6c;box-shadow:inset 1px 1px 0 #fff;"></div>
<span class="t" style="left:174.8px;top:824.15px;font-size:14px;letter-spacing:0.244px;">11/03/2023 15:32:00 UTC -03:00</span>
<div style="left:172px;top:842px;width:542px;height:22px;background:#f4f4f4;border-bottom:1px solid #eeeeee;"></div>
<div style="left:484px;top:842px;width:1px;height:22px;background:#e4e4e4;"></div>
<div style="left:632px;top:842px;width:1px;height:22px;background:#e4e4e4;"></div>
<div style="left:158px;top:842px;width:14px;height:22px;background:linear-gradient(#fbfbfc 0%,#f0f0f3 45%,#d6d7dc 100%);border-right:1px solid #6c6c6c;border-bottom:1px solid #6c6c6c;box-shadow:inset 1px 1px 0 #fff;"></div>
<span class="t" style="left:174.8px;top:846.15px;font-size:14px;letter-spacing:0.244px;">11/03/2023 16:21:56 UTC -03:00</span>
<div style="left:714px;top:288px;width:21px;height:600px;background:linear-gradient(90deg,#e4e4e6,#f3f3f3 40%,#ececee);"></div>
<div style="left:714px;top:288px;width:21px;height:20px;background:#f1f1f3;"></div>
<svg style="left:718px;top:292px" width="13" height="8" viewBox="0 0 13 8"><path d="M1 7.2L6.5 1.2L12 7.2z" fill="#525d80"/></svg>
<div style="left:715px;top:308px;width:19px;height:20px;background:linear-gradient(90deg,#fafafa,#e3e3e6);border:1px solid #9b9ba2;border-radius:2px;"></div>
<div style="left:720px;top:313.0px;width:8.5px;height:1px;background:#9a9aa3;"></div>
<div style="left:720px;top:315.5px;width:8.5px;height:1px;background:#9a9aa3;"></div>
<div style="left:720px;top:318.0px;width:8.5px;height:1px;background:#9a9aa3;"></div>
<div style="left:720px;top:320.5px;width:8.5px;height:1px;background:#9a9aa3;"></div>
<div style="left:737px;top:287px;width:310px;height:600px;background:#fff;border:1px solid #c6c6c6;"></div>
<span class="t" style="left:749px;top:333.51px;font-size:15.7px;color:#111;letter-spacing:-0.005px;">As 06:48horas, recebo o plantão com o </span>
<span class="t" style="left:1027px;top:333.51px;font-size:15.7px;color:#111;">paciente</span>
<span class="t" style="left:749px;top:354.31px;font-size:15.7px;color:#111;letter-spacing:-0.118px;">curso por AVP em MSD,   em dieta zero, </span>
<span class="t" style="left:1029.8px;top:354.31px;font-size:15.7px;color:#111;">acordado</span>
<div style="left:9px;top:287.5px;width:145.5px;height:28.5px;border-radius:4px;background:linear-gradient(#ffffff,#fafafa 60%,#f1f1f1);border:1px solid #c9c9c9;border-bottom-color:#b5b5b5;"></div>
<span class="t" style="left:73.4px;top:295.15px;font-size:14px;letter-spacing:-0.047px;">Novo</span>
<div style="left:9px;top:318.6px;width:145.5px;height:28.599999999999966px;border-radius:4px;background:#f9f9f9;border:1px solid #e4e4e4;"></div>
<span class="t" style="left:63px;top:326.15px;font-size:14px;color:#8b8b8b;letter-spacing:-0.784px;">Visualizar</span>
<div style="left:9px;top:350.2px;width:145.5px;height:28.0px;border-radius:4px;background:#f9f9f9;border:1px solid #e4e4e4;"></div>
<span class="t" style="left:70.3px;top:357.75px;font-size:14px;color:#8b8b8b;letter-spacing:-0.362px;">Alterar</span>
<div style="left:9px;top:381.6px;width:145.5px;height:28.0px;border-radius:4px;background:#f9f9f9;border:1px solid #e4e4e4;"></div>
<span class="t" style="left:70.8px;top:388.75px;font-size:14px;color:#8b8b8b;letter-spacing:-0.445px;">Excluir</span>
<div style="left:9px;top:412.7px;width:145.5px;height:27.900000000000034px;border-radius:4px;background:#f9f9f9;border:1px solid #e4e4e4;"></div>
<span class="t" style="left:65.7px;top:420.25px;font-size:14px;color:#8b8b8b;letter-spacing:-0.432px;">Duplicar</span>
<div style="left:9px;top:444px;width:145.5px;height:28px;border-radius:4px;background:#f9f9f9;border:1px solid #e4e4e4;"></div>
<span class="t" style="left:61.5px;top:451.15px;font-size:14px;color:#8b8b8b;letter-spacing:-0.841px;">Assinar</span>
<div style="left:140px;top:446px;width:1px;height:24px;background:#9d9d9d;"></div>
<svg style="left:143px;top:456px" width="10" height="5" viewBox="0 0 10 5"><path d="M0 0h10L5 5z" fill="#9b9b9b"/></svg>
<div style="left:9px;top:475.4px;width:145.5px;height:34.0px;border-radius:4px;background:#f9f9f9;border:1px solid #e4e4e4;"></div>
<span class="t" style="left:54.4px;top:478.15px;font-size:14px;color:#8b8b8b;letter-spacing:-0.285px;">Histórico de</span>
<span class="t" style="left:57.5px;top:495.15px;font-size:14px;color:#8b8b8b;letter-spacing:-0.424px;">Retificação</span>
<div style="left:9px;top:512.2px;width:145.5px;height:37.799999999999955px;border-radius:4px;background:linear-gradient(#ffffff,#f3f3f3);border:1px solid #3c7fd1;box-shadow:inset 0 0 0 1px #d9e8f9;"></div>
<span class="t" style="left:57px;top:515.95px;font-size:14px;letter-spacing:-0.156px;">Imprimir</span>
<span class="t" style="left:44.3px;top:532.95px;font-size:14px;letter-spacing:-0.639px;">Selecionadas</span>
<div style="left:11px;top:514px;width:128px;height:34px;border:1px dotted #222;"></div>
<div style="left:140px;top:515px;width:1px;height:32px;background:#333;"></div>
<svg style="left:143px;top:529px" width="10" height="5" viewBox="0 0 10 5"><path d="M0 0h10L5 5z" fill="#111"/></svg>
<div style="left:9px;top:553px;width:145.5px;height:27.399999999999977px;border-radius:4px;background:linear-gradient(#ffffff,#fafafa 60%,#f1f1f1);border:1px solid #c9c9c9;border-bottom-color:#b5b5b5;"></div>
<span class="t" style="left:62.5px;top:559.75px;font-size:14px;letter-spacing:-0.393px;">Registros</span>
<div style="left:9px;top:583.8px;width:145.5px;height:27.700000000000045px;border-radius:4px;background:linear-gradient(#ffffff,#fafafa 60%,#f1f1f1);border:1px solid #c9c9c9;border-bottom-color:#b5b5b5;"></div>
<span class="t" style="left:32.1px;top:590.35px;font-size:14px;letter-spacing:-0.533px;">Escalas e Índices</span>
<div style="left:140.5px;top:586px;width:1px;height:24px;background:#333;"></div>
<svg style="left:143px;top:596px" width="10" height="5" viewBox="0 0 10 5"><path d="M0 0h10L5 5z" fill="#111"/></svg>
<div style="left:9px;top:615.5px;width:145.5px;height:27.5px;border-radius:4px;background:linear-gradient(#ffffff,#fafafa 60%,#f1f1f1);border:1px solid #c9c9c9;border-bottom-color:#b5b5b5;"></div>
<span class="t" style="left:47.3px;top:622.75px;font-size:14px;letter-spacing:-0.212px;"><u>R</u>etornar(Esc)</span>
<svg style="left:8px;top:290px" width="24" height="350" viewBox="8 290 24 350">
<defs>
<linearGradient id="tl" x1="0" y1="0" x2="0" y2="1"><stop offset="0" stop-color="#3e86a0"/><stop offset="1" stop-color="#62a9c1"/></linearGradient>
<linearGradient id="rd2" x1="0" y1="0" x2="1" y2="1"><stop offset="0" stop-color="#ef3b45"/><stop offset="1" stop-color="#a70c16"/></linearGradient>
</defs>
<!-- novo -->
<g fill="url(#tl)"><circle cx="17.2" cy="300" r="3.9"/><rect x="13" y="298.6" width="8.4" height="2.8" rx="1"/><rect x="15.8" y="295.8" width="2.8" height="8.4" rx="1"/>
<rect x="19" y="301.8" width="5.8" height="2.2" rx=".6"/><rect x="20.8" y="300" width="2.2" height="5.8" rx=".6"/></g>
<g transform="translate(0 326.4)">
<path d="M14 .6 h5 l1.8 1.8 v9.6 h-6.8Z" fill="#f4f7fa" stroke="#8f9aa6" stroke-width=".7"/>
<path d="M15.4 3.4 h3M15.4 5.4 h2" stroke="#b7c0c9" stroke-width=".7"/>
<path d="M20.8 8.4 L25.2 12.6" stroke="#a5794a" stroke-width="2" stroke-linecap="round"/>
<circle cx="18.8" cy="6.6" r="3.1" fill="#bfe0f6" fill-opacity=".9" stroke="#6a9fc8" stroke-width="1"/>
<path d="M17 5.6 q1 -1.4 2.6 -1" stroke="#fff" stroke-width=".8" fill="none"/>
</g>
<!-- alterar pencil -->
<g><path d="M13.6 369.2 L15 364.6 L22 358.6 Q23.4 358.2 24.4 359.6 Q25.2 361 24.6 362 L17.6 367.8Z" fill="url(#tl)"/><path d="M16.4 365.4 L22.6 360.2" stroke="#dff0f6" stroke-width="1.1"/><path d="M13.6 369.2 L14.3 366.9 L15.9 368.4Z" fill="#2f6c83"/></g>
<!-- excluir -->
<rect x="13" y="393" width="11.8" height="4" rx=".8" fill="url(#tl)"/>
<!-- duplicar -->
<g><rect x="17.4" y="417.8" width="9.4" height="12" rx="1" fill="#c9141f" stroke="#8d0a12" stroke-width=".5"/><path d="M18.6 418.8 v10" stroke="#f6bcbc" stroke-width=".8"/>
<rect x="14.2" y="419.8" width="9.4" height="12" rx="1" fill="#d31a25" stroke="#8d0a12" stroke-width=".5"/><path d="M15.4 420.8 v10" stroke="#f6bcbc" stroke-width=".8"/>
<rect x="11" y="421.8" width="9.6" height="12" rx="1" fill="url(#rd2)" stroke="#8d0a12" stroke-width=".5"/>
<path d="M15.8 424.6 v6.4 M12.6 427.8 h6.4" stroke="#fff" stroke-width="2"/></g>
<!-- assinar -->
<g><path d="M12 453 L21 451.4 L24.4 453.2 L24 464 L14 465.6 L12 463.6Z" fill="#cfd2d2" stroke="#6f7474" stroke-width=".7"/>
<path d="M14.2 455 L22.4 453.8 M14.2 457 L22.4 455.8 M14.2 459 L22.4 457.8" stroke="#8b9090" stroke-width=".9"/>
<path d="M13.4 462.4 L17 460.6 L18.6 461.8 L22.4 458.6 L23.2 460 L27 455.6" stroke="#2fae3a" stroke-width="1.5" fill="none"/><circle cx="25.6" cy="461.6" r=".8" fill="#2fae3a"/></g>
<g transform="translate(0 485.8)">
<path d="M14 .6 h5 l1.8 1.8 v9.6 h-6.8Z" fill="#f4f7fa" stroke="#8f9aa6" stroke-width=".7"/>
<path d="M15.4 3.4 h3M15.4 5.4 h2" stroke="#b7c0c9" stroke-width=".7"/>
<path d="M20.8 8.4 L25.2 12.6" stroke="#a5794a" stroke-width="2" stroke-linecap="round"/>
<circle cx="18.8" cy="6.6" r="3.1" fill="#bfe0f6" fill-opacity=".9" stroke="#6a9fc8" stroke-width="1"/>
<path d="M17 5.6 q1 -1.4 2.6 -1" stroke="#fff" stroke-width=".8" fill="none"/>
</g>
<!-- imprimir -->
<g><path d="M17.4 525.4 L23 526.2 L23.4 530 L17 529.2Z" fill="#2b2c30"/>
<path d="M13.4 530.6 L16.6 527.8 L25 529.4 L25.6 533.4 L21.4 536 L13.2 534Z" fill="#3b3d43"/>
<path d="M14 531.4 L21.6 533 L25 530.4" stroke="#888c94" stroke-width=".7" fill="none"/>
<path d="M14.4 534.2 L20.6 535.6 L21.4 534.2 L15.4 532.8Z" fill="#e8f2fa"/><path d="M13.2 533.6 L12.6 535.2 L19.4 536.6 L20.6 535.6" fill="#cfd6dc"/></g>
<!-- registros -->
<g><path d="M12.2 558.2 h11.6 l3 3 v12.6 h-14.6Z" fill="#fafafa" stroke="#b9b9b9" stroke-width=".6"/><path d="M23.8 558.2 v3 h3" fill="#e2e2e2" stroke="#b9b9b9" stroke-width=".5"/>
<rect x="12.4" y="567.2" width="14.2" height="6.4" fill="#5aa83f"/>
<text x="19.5" y="566.2" font-family="Liberation Sans, sans-serif" font-size="5.4" font-weight="700" text-anchor="middle" fill="#222">ACT</text>
<text x="19.5" y="572.6" font-family="Liberation Sans, sans-serif" font-size="5.4" font-weight="700" text-anchor="middle" fill="#e9f6e2">LOG</text></g>
<!-- escalas -->
<g><rect x="13.6" y="590" width="13.4" height="13.6" fill="#f2f7fd" stroke="#5b8fd6" stroke-width=".6"/><rect x="13.6" y="590" width="13.4" height="2.6" fill="#3f7bd4"/>
<path d="M13.6 595 h13.4M13.6 597.4 h13.4M13.6 599.8 h13.4M18 592.6 v11M22.6 592.6 v11" stroke="#7aa6e2" stroke-width=".6"/>
<ellipse cx="15.4" cy="603" rx="4.6" ry="3.4" fill="#f0f0f2" stroke="#a6a6aa" stroke-width=".5"/><circle cx="15.4" cy="597.2" r="2.6" fill="#f7f7f8" stroke="#a6a6aa" stroke-width=".5"/>
<path d="M18.6 601 L20.4 602.6 L18.6 604Z" fill="#e0232c"/>
<circle cx="23.2" cy="602.4" r="3.6" fill="#1f62d8" stroke="#1246ad" stroke-width=".4"/>
<text x="23.2" y="604.6" font-family="Liberation Sans, sans-serif" font-size="6" font-weight="700" text-anchor="middle" fill="#fff">?</text></g>
<!-- retornar -->
<path d="M13.4 629.4 L19.2 624.2 L20.6 625.8 L17.8 628.3 L25.6 628.3 L25.6 630.6 L17.8 630.6 L20.6 633.2 L19.2 634.8Z" fill="#74b2ca"/>
</svg>
<svg style="left:138px;top:152px" width="24" height="18" viewBox="138 152 24 18">
<path d="M147.6 154.2 L155 155 L153 161 L145 160Z" fill="#eef0f3" stroke="#8d929a" stroke-width=".7"/>
<path d="M155 155 L158.4 156.6 L158.4 164 L155.6 165.4Z" fill="#cfd3d9" stroke="#7f848c" stroke-width=".7"/>
<path d="M140.4 160 L146.6 158.6 L154.4 160.6 L154.6 163 L148.6 166.6 L140.6 163.6Z" fill="#e2e5ea" stroke="#8a8f97" stroke-width=".6"/>
<path d="M141.8 160.4 L147.4 159.2 L153.6 160.8 L148.4 163.4Z" fill="#456fba"/>
<path d="M148.4 163.4 L153.6 160.8 L153.6 162.4 L148.6 165.2Z" fill="#2c4a8a"/>
<path d="M148.8 166.4 v1.6 M156.2 165 v2 M142.4 164.4 v1.4" stroke="#6f737a" stroke-width="1.1"/>
</svg>
<div style="left:3px;top:611px;width:160px;height:41px;border:3px solid #f0444a;box-shadow:0 2px 4px rgba(0,0,0,.35);border-radius:1px;"></div>
<div style="left:56px;top:654px;width:40px;height:40px;background:#f7434b;border-radius:50%;box-shadow:0 3px 6px rgba(0,0,0,.45);"></div>
<span class="t" style="left:76px;top:660.70px;font-size:28px;color:#fff;transform:translateX(-50%);">6</span>
</div>
</body></html>
